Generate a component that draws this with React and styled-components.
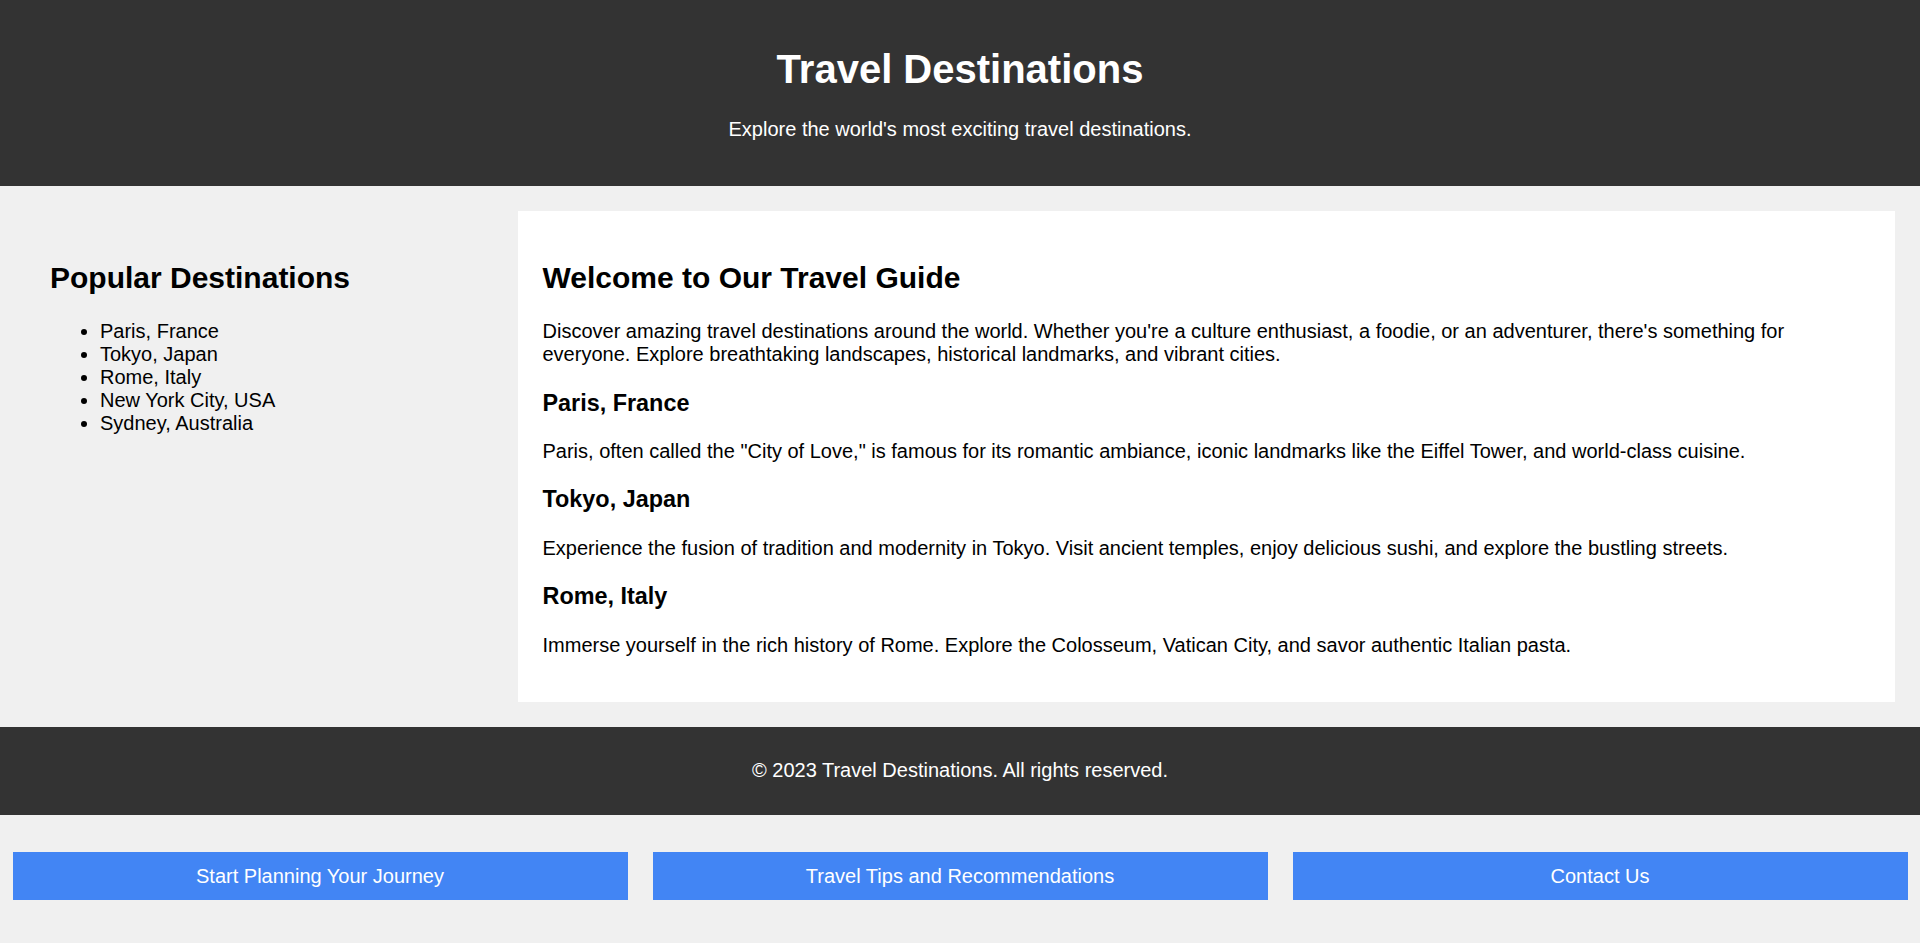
import React from 'react';
import styled, { createGlobalStyle } from 'styled-components';

const GlobalStyle = createGlobalStyle`
  html, body {
    margin: 0;
    padding: 0;
  }
  body {
    font-family: "Liberation Sans", Arial, sans-serif;
    font-size: 20px;
    color: #000;
    background-color: #f0f0f0;
  }
  * {
    box-sizing: border-box;
  }
`;

const Header = styled.header`
  background-color: #333;
  color: #fff;
  text-align: center;
  padding: 25px;
`;

const Title = styled.h1`
  margin: 21.5px 0 26.8px;
  font-size: 40px;
  font-weight: bold;
`;

const Tagline = styled.p`
  margin: 0 0 20px;
`;

const Main = styled.main`
  display: flex;
  gap: 25px;
  padding: 25px;
`;

const Sidebar = styled.aside`
  flex: 0 0 25%;
  padding: 25px;
`;

const Content = styled.section`
  flex: 1;
  background-color: #fff;
  padding: 25px;
`;

const SectionTitle = styled.h2`
  margin: 25px 0;
  font-size: 30px;
`;

const PlaceTitle = styled.h3`
  margin: 23.4px 0;
  font-size: 23.4px;
`;

const Text = styled.p`
  margin: 20px 0;
`;

const List = styled.ul`
  margin: 20px 0;
  padding-left: 50px;
`;

const Footer = styled.footer`
  background-color: #333;
  color: #fff;
  text-align: center;
  padding: 12.5px;
`;

const ButtonRow = styled.div`
  display: flex;
  gap: 25px;
  padding: 37.5px 12.5px;
`;

const Button = styled.button`
  flex: 1;
  border: none;
  background-color: #4285f4;
  color: #fff;
  font-family: inherit;
  font-size: 20px;
  padding: 12.5px;
  cursor: pointer;
`;

const popular = ['Paris, France', 'Tokyo, Japan', 'Rome, Italy', 'New York City, USA', 'Sydney, Australia'];

const places = [
  {
    name: 'Paris, France',
    text: 'Paris, often called the "City of Love," is famous for its romantic ambiance, iconic landmarks like the Eiffel Tower, and world-class cuisine.',
  },
  {
    name: 'Tokyo, Japan',
    text: 'Experience the fusion of tradition and modernity in Tokyo. Visit ancient temples, enjoy delicious sushi, and explore the bustling streets.',
  },
  {
    name: 'Rome, Italy',
    text: 'Immerse yourself in the rich history of Rome. Explore the Colosseum, Vatican City, and savor authentic Italian pasta.',
  },
];

const App = () => {
  return (
    <>
      <GlobalStyle />
      <Header>
        <Title>Travel Destinations</Title>
        <Tagline>Explore the world's most exciting travel destinations.</Tagline>
      </Header>
      <Main>
        <Sidebar>
          <SectionTitle>Popular Destinations</SectionTitle>
          <List>
            {popular.map((p) => (
              <li key={p}>{p}</li>
            ))}
          </List>
        </Sidebar>
        <Content>
          <SectionTitle>Welcome to Our Travel Guide</SectionTitle>
          <Text>
            Discover amazing travel destinations around the world. Whether you're a culture enthusiast, a foodie, or an
            adventurer, there's something for everyone. Explore breathtaking landscapes, historical landmarks, and vibrant
            cities.
          </Text>
          {places.map((p) => (
            <React.Fragment key={p.name}>
              <PlaceTitle>{p.name}</PlaceTitle>
              <Text>{p.text}</Text>
            </React.Fragment>
          ))}
        </Content>
      </Main>
      <Footer>
        <Text>&copy; 2023 Travel Destinations. All rights reserved.</Text>
      </Footer>
      <ButtonRow>
        <Button>Start Planning Your Journey</Button>
        <Button>Travel Tips and Recommendations</Button>
        <Button>Contact Us</Button>
      </ButtonRow>
    </>
  );
};

export default App;
